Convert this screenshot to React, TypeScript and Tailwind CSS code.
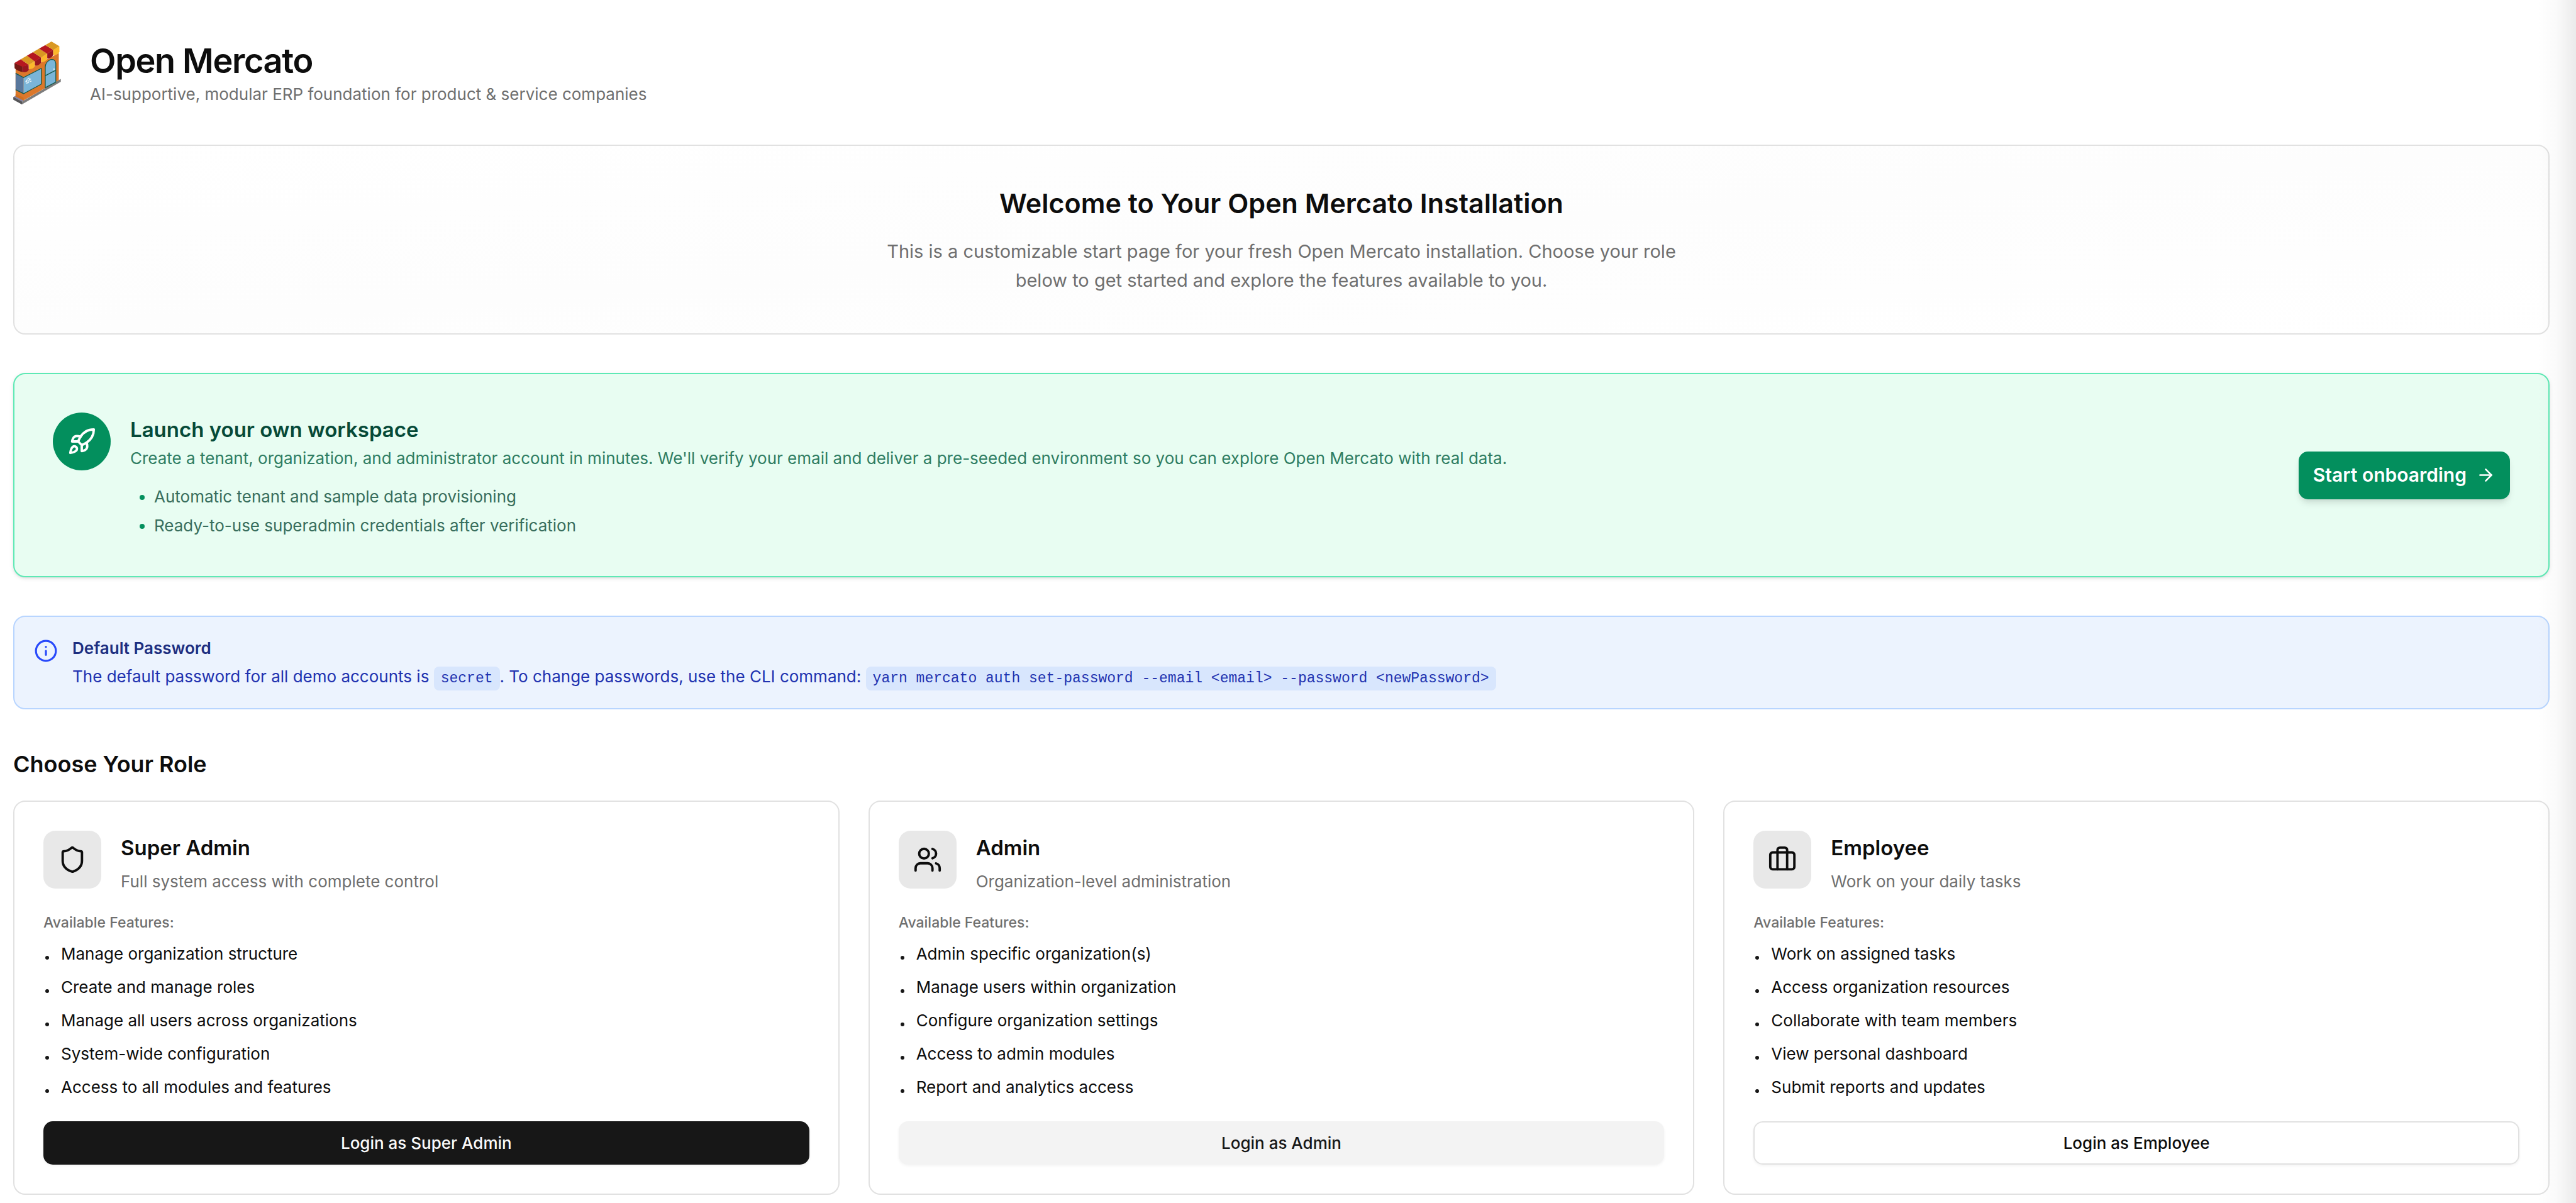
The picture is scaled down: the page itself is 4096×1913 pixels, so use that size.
import { ArrowRight, Info, Rocket, Shield, Users, type LucideIcon } from "lucide-react";

type Role = {
  name: string;
  summary: string;
  icon: LucideIcon | typeof Luggage;
  features: string[];
  buttonClass: string;
};

function Luggage({ className }: { className?: string }) {
  return (
    <svg
      className={className}
      viewBox="0 0 24 24"
      fill="none"
      stroke="currentColor"
      strokeWidth="2"
      strokeLinecap="round"
      strokeLinejoin="round"
      aria-hidden="true"
    >
      <path d="M16 20V4a2 2 0 0 0-2-2h-4a2 2 0 0 0-2 2v16" />
      <rect width="20" height="14" x="2" y="6" rx="2" />
    </svg>
  );
}

const roles: Role[] = [
  {
    name: "Super Admin",
    summary: "Full system access with complete control",
    icon: Shield,
    features: [
      "Manage organization structure",
      "Create and manage roles",
      "Manage all users across organizations",
      "System-wide configuration",
      "Access to all modules and features",
    ],
    buttonClass: "bg-[#171717] text-[#fafafa]",
  },
  {
    name: "Admin",
    summary: "Organization-level administration",
    icon: Users,
    features: [
      "Admin specific organization(s)",
      "Manage users within organization",
      "Configure organization settings",
      "Access to admin modules",
      "Report and analytics access",
    ],
    buttonClass: "bg-[#f3f3f3] text-[#171717]",
  },
  {
    name: "Employee",
    summary: "Work on your daily tasks",
    icon: Luggage,
    features: [
      "Work on assigned tasks",
      "Access organization resources",
      "Collaborate with team members",
      "View personal dashboard",
      "Submit reports and updates",
    ],
    buttonClass: "border-2 border-[#e1e1e1] bg-white text-[#0d0d0d]",
  },
];

function Logo() {
  return (
    <svg className="h-[102px] w-[76px] shrink-0" viewBox="66 80 240 320" role="img" aria-label="Open Mercato">
      {/* pavement */}
      <path d="M67 361 L110 384 L305 270 V284 L110 398 L67 374 Z" fill="#7d7d7d" />
      <path d="M67 361 L79 354 L124 376 L110 384 Z" fill="#8582a3" />
      <path d="M67 361 L110 384 V398 L67 374 Z" fill="#555558" />
      {/* walls */}
      <path d="M78 215 L118 235 L295 140 V276 L118 378 L78 358 Z" fill="#dc782b" />
      <path d="M78 344 L118 364 V378 L78 358 Z" fill="#d2701f" />
      {/* corner window */}
      <path d="M78 240 L118 262 V344 L78 324 Z" fill="#59779c" />
      <path d="M118 262 L207 216 V296 L118 344 Z" fill="#7ab5d8" />
      <path d="M78 242 L118 263 L207 217 V296 L118 344 L78 324" fill="none" stroke="#14594a" strokeWidth="4" />
      <g stroke="#e4f1f8" strokeWidth="5" strokeLinecap="round">
        <path d="M140 268 L146 266 M131 277 L137 275 M147 273 L153 271 M129 284 L134 282 M141 281 L146 279 M151 283 L156 281 M133 291 L143 288" />
      </g>
      {/* door */}
      <path d="M227 314 V210 Q229 184 253 173 Q277 168 280 192 V286 Z" fill="#7ab5d8" stroke="#14594a" strokeWidth="4" />
      <path d="M227 254 L280 226" stroke="#14594a" strokeWidth="4" />
      <path d="M271 218 V225" stroke="#ffffff" strokeWidth="4" strokeLinecap="round" />
      {/* awning scallops */}
      <path d="M72 190 L113 206 V235 Q90 232 73 216 Z" fill="#741a15" />
      <path d="M113 206 L144 199 V224 Q136 239 113 235 Z" fill="#98171f" />
      <path d="M144 199 L175 181 V206 Q166 222 145 220 Z" fill="#fcb72b" />
      <path d="M175 181 L206 162 V187 Q196 205 175 203 Z" fill="#98171f" />
      <path d="M206 162 L237 143 V170 Q228 187 206 186 Z" fill="#fcb72b" />
      <path d="M237 143 L267 124 V150 Q258 168 237 167 Z" fill="#98171f" />
      <path d="M267 124 L298 106 V134 Q289 151 267 150 Z" fill="#fcb72b" />
      {/* awning roof */}
      <path d="M72 190 L104 171 L144 199 L113 209 Z" fill="#b51820" />
      <path d="M104 171 L135 153 L175 181 L144 200 Z" fill="#d99823" />
      <path d="M135 153 L165 136 L206 162 L175 182 Z" fill="#b51820" />
      <path d="M165 136 L196 118 L237 143 L206 163 Z" fill="#d99823" />
      <path d="M196 118 L227 100 L267 124 L237 144 Z" fill="#b51820" />
      <path d="M227 100 L258 82 L298 106 L267 125 Z" fill="#d99823" />
    </svg>
  );
}

function RoleCard({ role }: { role: Role }) {
  const Icon = role.icon;
  return (
    <article className="flex flex-col rounded-[19px] border-2 border-[#e1e1e1] bg-white p-[46px]">
      <div className="flex items-start gap-[31px]">
        <div className="flex size-[92px] shrink-0 items-center justify-center rounded-[19px] bg-[#e8e8e8]">
          <Icon className="size-[46px]" />
        </div>
        <div>
          <h3 className="text-[33px] leading-[54px] font-semibold">{role.name}</h3>
          <p className="mt-2 text-[26px] leading-[38px] text-[#6f6f6f]">{role.summary}</p>
        </div>
      </div>
      <p className="mt-[31px] text-[23px] leading-[31px] font-medium text-[#6f6f6f]">Available Features:</p>
      <ul className="mt-[15px] flex flex-col gap-[15px] text-[26px] leading-[38px]">
        {role.features.map((feature) => (
          <li key={feature} className="flex items-start gap-[19px]">
            <span className="mt-[22px] ml-[3px] size-[6px] shrink-0 rounded-full bg-[#171717]" />
            <span>{feature}</span>
          </li>
        ))}
      </ul>
      <button
        type="button"
        className={`mt-[35px] flex h-[69px] items-center justify-center rounded-[15px] text-[26px] font-medium shadow-[0_2px_4px_rgba(0,0,0,0.05)] ${role.buttonClass}`}
      >
        Login as {role.name}
      </button>
    </article>
  );
}

export default function App() {
  return (
    <div className="relative min-h-screen bg-white font-[Inter,sans-serif] text-[#0d0d0d]">
      <main className="flex flex-col gap-[61px] pt-[62px] pr-[42px] pb-[11px] pl-[21px]">
        <header className="flex items-center gap-[46px]">
          <Logo />
          <div>
            <h1 className="text-[54px] leading-[69px] font-semibold tracking-tight">Open Mercato</h1>
            <p className="text-[26px] leading-[38px] text-[#6f6f6f]">
              AI-supportive, modular ERP foundation for product &amp; service companies
            </p>
          </div>
        </header>

        <section className="rounded-[19px] border-2 border-[#e1e1e1] bg-linear-to-br from-white via-[#fdfdfd] to-white p-[61px] text-center">
          <h2 className="mb-[23px] text-[43px] leading-[61px] font-semibold">Welcome to Your Open Mercato Installation</h2>
          <p className="mx-auto max-w-[1284px] text-[29px] leading-[46px] text-[#6f6f6f]">
            This is a customizable start page for your fresh Open Mercato installation. Choose your role below to get
            started and explore the features available to you.
          </p>
        </section>

        <section className="flex items-center justify-between gap-[46px] rounded-[19px] border-2 border-[#5ee9b5] bg-[#e8fdf2] p-[61px] shadow-[0_2px_6px_rgba(0,0,0,0.1),0_2px_4px_-2px_rgba(0,0,0,0.1)]">
          <div className="flex items-start gap-[31px]">
            <div className="flex size-[92px] shrink-0 items-center justify-center rounded-full bg-[#038f5d] text-white">
              <Rocket className="size-[46px]" />
            </div>
            <div>
              <h3 className="text-[33px] leading-[54px] font-semibold text-[#064a38]">Launch your own workspace</h3>
              <p className="text-[26px] leading-[38px] text-[#2f7d63]">
                Create a tenant, organization, and administrator account in minutes. We'll verify your email and deliver
                a pre-seeded environment so you can explore Open Mercato with real data.
              </p>
              <ul className="mt-[23px] flex list-disc flex-col gap-2 pl-[38px] text-[26px] leading-[38px] text-[#386e5d] marker:text-[#038f5d]">
                <li>Automatic tenant and sample data provisioning</li>
                <li>Ready-to-use superadmin credentials after verification</li>
              </ul>
            </div>
          </div>
          <a
            href="#onboarding"
            className="flex h-[76px] shrink-0 items-center gap-[15px] rounded-[15px] bg-[#038f5d] px-[23px] text-[30px] font-semibold text-white shadow-[0_8px_12px_-2px_rgba(0,0,0,0.1),0_4px_8px_-4px_rgba(0,0,0,0.1)]"
          >
            Start onboarding
            <ArrowRight className="size-[31px]" />
          </a>
        </section>

        <section className="flex items-start gap-[23px] rounded-[19px] border-2 border-[#b8d5ff] bg-[#ecf3fe] p-[31px]">
          <Info className="mt-1 size-[38px] shrink-0 text-[#2849fb]" />
          <div className="text-[26px] leading-[38px]">
            <p className="font-semibold text-[#1d2e80]">Default Password</p>
            <p className="mt-[7px] text-[#2132b0]">
              The default password for all demo accounts is{" "}
              <code className="rounded-[8px] bg-[#d8e6fd] px-[11px] py-[6px] font-['Liberation_Mono',monospace] text-[23px] leading-none">
                secret
              </code>
              . To change passwords, use the CLI command:{" "}
              <code className="rounded-[8px] bg-[#d8e6fd] px-[11px] py-[6px] font-['Liberation_Mono',monospace] text-[23px] leading-none">
                yarn mercato auth set-password --email &lt;email&gt; --password &lt;newPassword&gt;
              </code>
            </p>
          </div>
        </section>

        <section>
          <h2 className="mb-[31px] text-[36px] leading-[53px] font-semibold">Choose Your Role</h2>
          <div className="grid grid-cols-3 gap-[46px]">
            {roles.map((role) => (
              <RoleCard key={role.name} role={role} />
            ))}
          </div>
        </section>
      </main>
      <div className="pointer-events-none absolute inset-y-0 right-0 w-[62px] bg-linear-to-r from-transparent via-black/2 to-black/8" />
    </div>
  );
}
